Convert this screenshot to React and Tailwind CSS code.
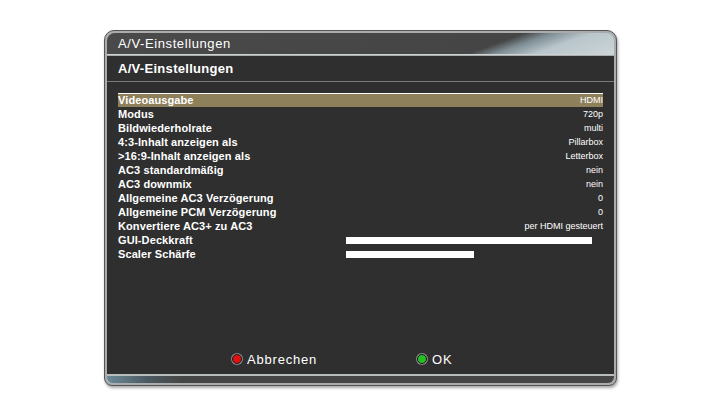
const rows = [
  { label: "Videoausgabe", value: "HDMI", active: true },
  { label: "Modus", value: "720p" },
  { label: "Bildwiederholrate", value: "multi" },
  { label: "4:3-Inhalt anzeigen als", value: "Pillarbox" },
  { label: ">16:9-Inhalt anzeigen als", value: "Letterbox" },
  { label: "AC3 standardmäßig", value: "nein" },
  { label: "AC3 downmix", value: "nein" },
  { label: "Allgemeine AC3 Verzögerung", value: "0" },
  { label: "Allgemeine PCM Verzögerung", value: "0" },
  { label: "Konvertiere AC3+ zu AC3", value: "per HDMI gesteuert" },
  { label: "GUI-Deckkraft", bar: 246 },
  { label: "Scaler Schärfe", bar: 128 },
];

const Dot = ({ color }) => (
  <span
    className={`w-[10px] h-[10px] rounded-full border border-[#1a1a1a] shadow-[0_0_0_1px_#888] ${color}`}
  />
);

const App = () => {
  return (
    <div className="w-[720px] h-[405px] bg-white flex justify-center pt-[30px] font-['Liberation_Sans',Arial,sans-serif]">
      <div className="w-[513px] h-[356px] ml-[1px] rounded-t-[10px] rounded-b-[8px] border border-[#555] bg-[#a9adae] p-[2px] flex flex-col shadow-[1px_2px_3px_rgba(0,0,0,0.35)]">
        {/* title bar */}
        <div className="h-[22px] rounded-t-[8px] border-b border-[#cfd3d4] bg-[linear-gradient(160deg,#4a4a4a_0%,#454545_74%,#7f8e95_79%,#b9c6cb_86%,#cdd5d8_100%)] flex items-center pl-[11px] text-white text-[13px] tracking-[0.6px] leading-none">
          A/V-Einstellungen
        </div>
        {/* body */}
        <div className="flex-1 bg-[#2f2f2f] flex flex-col mt-[1px]">
          <div className="h-[26px] flex items-center pl-[11px] border-b border-[#7a7a7a] text-white text-[13px] font-bold tracking-[0.3px] leading-none">
            A/V-Einstellungen
          </div>
          <div className="flex flex-col px-[11px] pt-[11px]">
            {rows.map((r) => (
              <div
                key={r.label}
                className={`h-[14px] flex items-center justify-between ${
                  r.active ? "bg-[#8f805c] border-t border-white" : ""
                }`}
              >
                <span className="text-white text-[11px] font-bold tracking-[0.1px] leading-none">{r.label}</span>
                {r.bar ? (
                  <div className="w-[257px] flex">
                    <div className="h-[7px] bg-white" style={{ width: r.bar }} />
                  </div>
                ) : (
                  <span className="text-white text-[9px] leading-none">{r.value}</span>
                )}
              </div>
            ))}
          </div>
          <div className="flex-1" />
          <div className="h-[28px] flex items-center pb-[2px] text-white text-[13px] tracking-[0.8px] leading-none">
            <div className="flex items-center gap-[5px] ml-[125px]">
              <Dot color="bg-[#e01010]" />
              <span>Abbrechen</span>
            </div>
            <div className="flex items-center gap-[5px] ml-[100px]">
              <Dot color="bg-[#22c022]" />
              <span>OK</span>
            </div>
          </div>
        </div>
        {/* bottom bar */}
        <div className="h-[9px] rounded-b-[6px] border-t-2 border-[#b8bcbd] bg-[linear-gradient(90deg,#6d8a97_0%,#4b5a61_8%,#454545_15%,#454545_100%)]" />
      </div>
    </div>
  );
};

export default App;
